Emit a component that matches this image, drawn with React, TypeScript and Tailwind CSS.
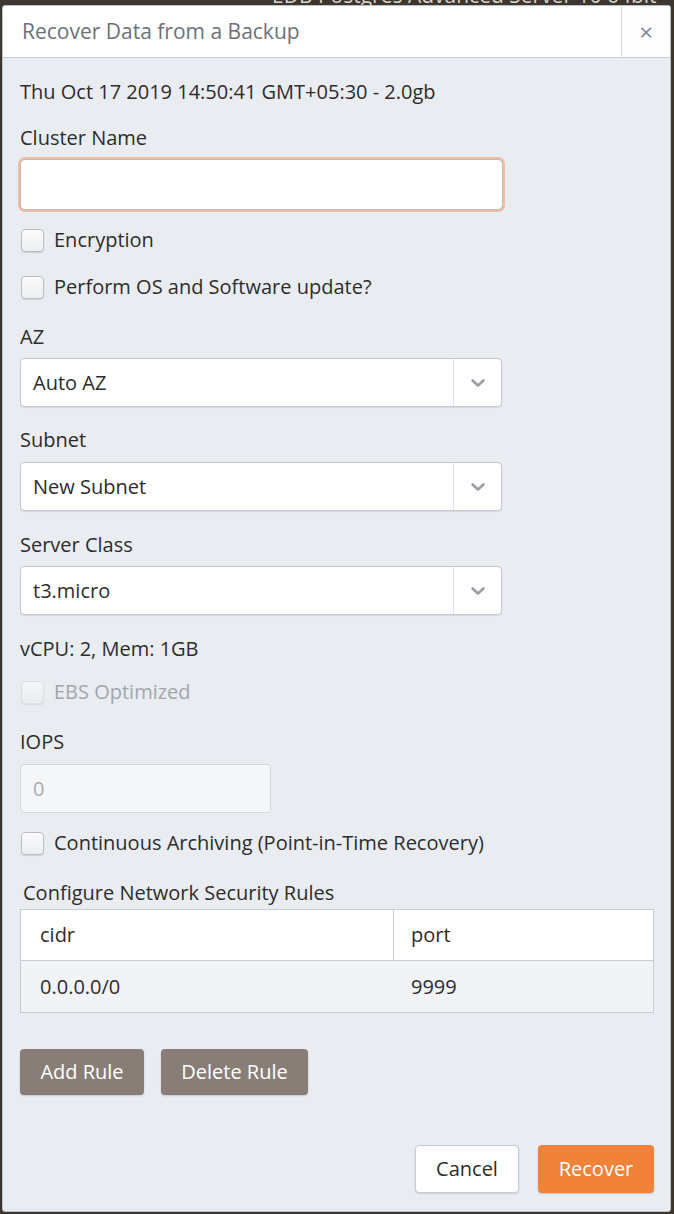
import React from 'react';

const font = { fontFamily: '"Open Sans", "Liberation Sans", sans-serif' };

const Checkbox: React.FC<{ label: string; disabled?: boolean; className?: string }> = ({ label, disabled, className }) => (
  <div className={`flex items-center h-6 ${className ?? ''}`}>
    <span
      className={`block w-[23px] h-[23px] ml-[1px] rounded-[4px] border bg-gradient-to-b from-[#fbfbfc] to-[#eceef1] shadow-[0_1px_1px_rgba(0,0,0,0.12)] ${
        disabled ? 'border-[#d3d7de] opacity-60' : 'border-[#b9bec7]'
      }`}
    />
    <span className={`ml-[10px] text-[20px] leading-6 ${disabled ? 'text-[#a3a7ad]' : 'text-[#2d2d2d]'}`}>{label}</span>
  </div>
);

const Select: React.FC<{ value: string; className?: string }> = ({ value, className }) => (
  <div className={`flex w-[482px] h-[49px] bg-white border border-[#c3c8cf] rounded-[4px] shadow-[0_1px_1px_rgba(0,0,0,0.08)] ${className ?? ''}`}>
    <div className="flex-1 flex items-center pl-[12px] text-[20px] text-[#2d2d2d]">{value}</div>
    <div className="w-[48px] flex items-center justify-center border-l border-[#dfe2e6]">
      <svg width="16" height="10" viewBox="0 0 16 10" fill="none">
        <path d="M2.5 2.5l5.5 5 5.5-5" stroke="#9a9ea4" strokeWidth="2.6" strokeLinecap="round" strokeLinejoin="round" />
      </svg>
    </div>
  </div>
);

const Label: React.FC<{ text: string; className?: string }> = ({ text, className }) => (
  <div className={`text-[20px] leading-6 text-[#2d2d2d] ${className ?? ''}`}>{text}</div>
);

export default function App() {
  return (
    <div className="w-[674px] h-[1214px] bg-[#3d362f] overflow-hidden relative" style={font}>
      <div className="h-[5px] overflow-hidden">
        <div className="ml-[272px] -mt-[17px] text-[21px] leading-6 text-[#d9d2c8] whitespace-nowrap">
          EDB Postgres Advanced Server 10 64bit
        </div>
      </div>
      <div className="ml-[2px] w-[669px] h-[1207px] bg-[#e9ecf1] border border-[#b8c2cf] rounded-[3px] flex flex-col">
        <div className="flex h-[52px] bg-white border-b border-[#c6cdd7] rounded-t-[3px]">
          <div className="flex-1 flex items-center pl-[19px] text-[21px] text-[#6c7179]">Recover Data from a Backup</div>
          <div className="w-[49px] flex items-center justify-center border-l border-[#d3d9e2] rounded-bl-[4px] bg-[#fdfdfe] text-[24px] text-[#7d8796]">
            ×
          </div>
        </div>
        <div className="pl-[17px] pr-[16px] pt-[22px] flex flex-col">
          <Label text="Thu Oct 17 2019 14:50:41 GMT+05:30 - 2.0gb" />
          <Label text="Cluster Name" className="mt-[22px]" />
          <div className="mt-[9px] w-[483px] h-[51px] bg-white rounded-[5px] border border-[#c9b9ae] shadow-[0_0_0_2px_rgba(240,150,100,0.55)]" />
          <Checkbox label="Encryption" className="mt-[18px]" />
          <Checkbox label="Perform OS and Software update?" className="mt-[23px]" />
          <Label text="AZ" className="mt-[26px]" />
          <Select value="Auto AZ" className="mt-[9px]" />
          <Label text="Subnet" className="mt-[21px]" />
          <Select value="New Subnet" className="mt-[10px]" />
          <Label text="Server Class" className="mt-[22px]" />
          <Select value="t3.micro" className="mt-[9px]" />
          <Label text="vCPU: 2, Mem: 1GB" className="mt-[22px]" />
          <Checkbox label="EBS Optimized" disabled className="mt-[19px]" />
          <Label text="IOPS" className="mt-[26px]" />
          <div className="mt-[10px] w-[251px] h-[49px] flex items-center pl-[12px] bg-[#f5f6f8] border border-[#d5d9df] rounded-[4px] text-[20px] text-[#a9adb3]">
            0
          </div>
          <Checkbox label="Continuous Archiving (Point-in-Time Recovery)" className="mt-[18px]" />
          <div className="mt-[26px] ml-[3px] text-[20px] leading-6 text-[#2d2d2d]">Configure Network Security Rules</div>
          <div className="mt-[4px] w-[634px] border border-[#c6ccd4] text-[20px] text-[#2d2d2d]">
            <div className="flex h-[51px] bg-white border-b border-[#c6ccd4]">
              <div className="w-[373px] flex items-center pl-[19px] border-r border-[#c6ccd4]">cidr</div>
              <div className="flex-1 flex items-center pl-[17px]">port</div>
            </div>
            <div className="flex h-[51px] bg-[#f1f3f6]">
              <div className="w-[373px] flex items-center pl-[19px]">0.0.0.0/0</div>
              <div className="flex-1 flex items-center pl-[17px]">9999</div>
            </div>
          </div>
          <div className="mt-[36px] flex gap-[17px]">
            <button className="h-[46px] w-[124px] rounded-[4px] bg-[#897e77] text-white text-[20px] shadow-[0_1px_2px_rgba(0,0,0,0.15)]">
              Add Rule
            </button>
            <button className="h-[46px] w-[147px] rounded-[4px] bg-[#897e77] text-white text-[20px] shadow-[0_1px_2px_rgba(0,0,0,0.15)]">
              Delete Rule
            </button>
          </div>
          <div className="mt-[50px] flex justify-end gap-[19px]">
            <button className="h-[48px] w-[104px] rounded-[4px] bg-white border border-[#c3cbd7] text-[#2d2d2d] text-[20px] shadow-[0_1px_2px_rgba(0,0,0,0.12)]">
              Cancel
            </button>
            <button className="h-[48px] w-[116px] rounded-[4px] bg-[#f0823a] text-white text-[20px] shadow-[0_1px_2px_rgba(0,0,0,0.15)]">
              Recover
            </button>
          </div>
        </div>
      </div>
    </div>
  );
}
